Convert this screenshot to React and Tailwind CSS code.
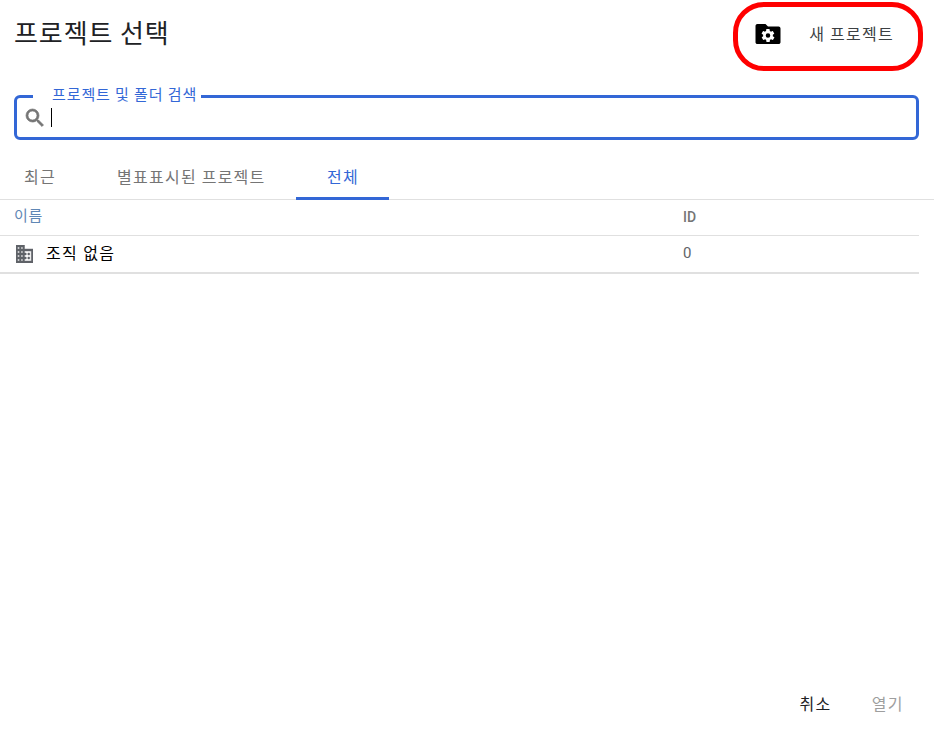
const F = { fontFamily: '"Noto Sans CJK KR", Roboto, sans-serif' };

function FolderGear() {
  return (
    <svg width="30" height="30" viewBox="0 0 24 24" className="block">
      <path fill="#000" d="M10 4H3.5C2.7 4 2 4.7 2 5.5v13c0 .8.7 1.5 1.5 1.5h17c.8 0 1.500-.7 1.500-1.500V7.500c0-.8-.7-1.500-1.500-1.500H12l-2-2z" />
      <path fill="#fff" transform="translate(12 13.2) scale(0.52) translate(-12 -12)" d="M19.4 13c0-.3.1-.6.1-1s0-.7-.1-1l2.100-1.600c.2-.2.2-.4.1-.6l-2-3.500c-.1-.2-.4-.3-.6-.2l-2.500 1c-.5-.4-1.100-.7-1.700-1l-.4-2.600c0-.3-.2-.5-.5-.5h-4c-.3 0-.5.2-.5.400l-.4 2.700c-.6.2-1.100.6-1.700 1l-2.500-1c-.2-.1-.5 0-.6.2l-2 3.500c-.1.200-.1.400.1.600L4.600 11c0 .3-.1.700-.1 1s0 .7.1 1l-2.100 1.600c-.2.2-.2.4-.1.6l2 3.500c.1.2.4.3.6.2l2.500-1c.5.4 1.100.7 1.700 1l.4 2.600c0 .2.2.4.5.4h4c.3 0 .5-.2.5-.4l.4-2.600c.6-.3 1.200-.6 1.700-1l2.500 1c.2.1.5 0 .6-.2l2-3.500c.1-.2.1-.4-.1-.6L19.400 13zM12 15.500a3.500 3.500 0 1 1 0-7 3.500 3.500 0 0 1 0 7z" />
    </svg>
  );
}

function Building() {
  return (
    <svg width="17" height="18" viewBox="2 3 20 18" preserveAspectRatio="none" className="block">
      <path fill="#5f6368" stroke="#5f6368" strokeWidth="0.5" d="M12 7V3H2v18h20V7H12zM6 19H4v-2h2v2zm0-4H4v-2h2v2zm0-4H4V9h2v2zm0-4H4V5h2v2zm4 12H8v-2h2v2zm0-4H8v-2h2v2zm0-4H8V9h2v2zm0-4H8V5h2v2zm10 12h-8v-2h2v-2h-2v-2h2v-2h-2V9h8v10zm-2-8h-2v2h2v-2zm0 4h-2v2h2v-2z" />
    </svg>
  );
}

export default function App() {
  return (
    <div style={F} className="relative w-[934px] h-[736px] bg-white flex flex-col overflow-hidden">
      <div className="h-[66px] flex items-start justify-between">
        <div className="pl-[14px] pt-[12px] text-[26px] leading-[40px] text-[#202124] tracking-[0.9px]">프로젝트 선택</div>
        <div className="flex items-center pr-[40px] pt-[19px]">
          <FolderGear />
          <span className="ml-[26px] pb-[2px] text-[16px] leading-[26px] text-[#3c4043] tracking-[1.25px]">새 프로젝트</span>
        </div>
      </div>

      <div className="relative mx-[14px] mt-[29px] w-[905px] h-[45px] border-[3px] border-[#3367d6] rounded-[6px] flex items-center pl-[6px]">
        <svg width="24" height="24" viewBox="0 0 24 24" className="block">
          <path fill="#757575" stroke="#757575" strokeWidth="0.7" d="M15.5 14h-.79l-.28-.27A6.47 6.47 0 0 0 16 9.5 6.500 6.500 0 1 0 9.500 16c1.610 0 3.090-.59 4.230-1.570l.27.28v.79l5 4.990L20.490 19l-4.990-5zm-6 0C7.010 14 5 11.990 5 9.500S7.010 5 9.500 5 14 7.010 14 9.500 11.990 14 9.500 14z" />
        </svg>
        <span className="ml-[4px] w-px h-[19px] bg-black" />
        <span className="absolute left-[16px] -top-[15px] pl-[19px] pr-[4px] bg-white text-[15px] leading-[22px] text-[#3367d6] tracking-[0.9px]">프로젝트 및 폴더 검색</span>
      </div>

      <div className="mt-[15px] h-[45px] flex border-b border-[#e0e0e0] text-[16px] text-[#757575] tracking-[1.25px]">
        <div className="w-[79px] pl-[24px] leading-[42px]">최근</div>
        <div className="pl-[38px] w-[217px] leading-[42px]">별표표시된 프로젝트</div>
        <div className="w-[93px] h-[45px] border-b-[3px] border-[#3367d6] pl-[31px] text-[#3367d6] leading-[42px]">전체</div>
      </div>

      <div className="w-[919px]">
        <div className="h-[36px] flex items-center border-b border-[#e0e0e0] text-[15px] tracking-[0.6px]">
          <div className="w-[683px] pl-[14px] pb-[5px] text-[#5f87b5]">이름</div>
          <div className="text-[14px] tracking-normal text-[#757575] font-medium" style={{ fontFamily: 'Roboto, sans-serif' }}>ID</div>
        </div>
        <div className="h-[38px] flex items-center border-b-2 border-[#e0e0e0] text-[16px] tracking-[1.4px]">
          <div className="w-[683px] pl-[16px] flex items-center">
            <Building />
            <span className="ml-[13px] pb-[5px] text-black">조직 없음</span>
          </div>
          <div className="text-[15px] tracking-normal text-[#5f6368] pb-[1px]" style={{ fontFamily: 'Roboto, sans-serif' }}>0</div>
        </div>
      </div>

      <div className="flex-1" />

      <div className="h-[62px] flex justify-end gap-[40px] pr-[30px] pt-[15px] text-[16px] leading-[28px] tracking-[1.4px]">
        <span className="text-[#202124]">취소</span>
        <span className="text-[#9e9e9e]">열기</span>
      </div>

      <div className="absolute left-[733px] top-[2px] w-[190px] h-[69px] border-[5px] border-[#ff0000] rounded-[31px]" />
    </div>
  );
}
